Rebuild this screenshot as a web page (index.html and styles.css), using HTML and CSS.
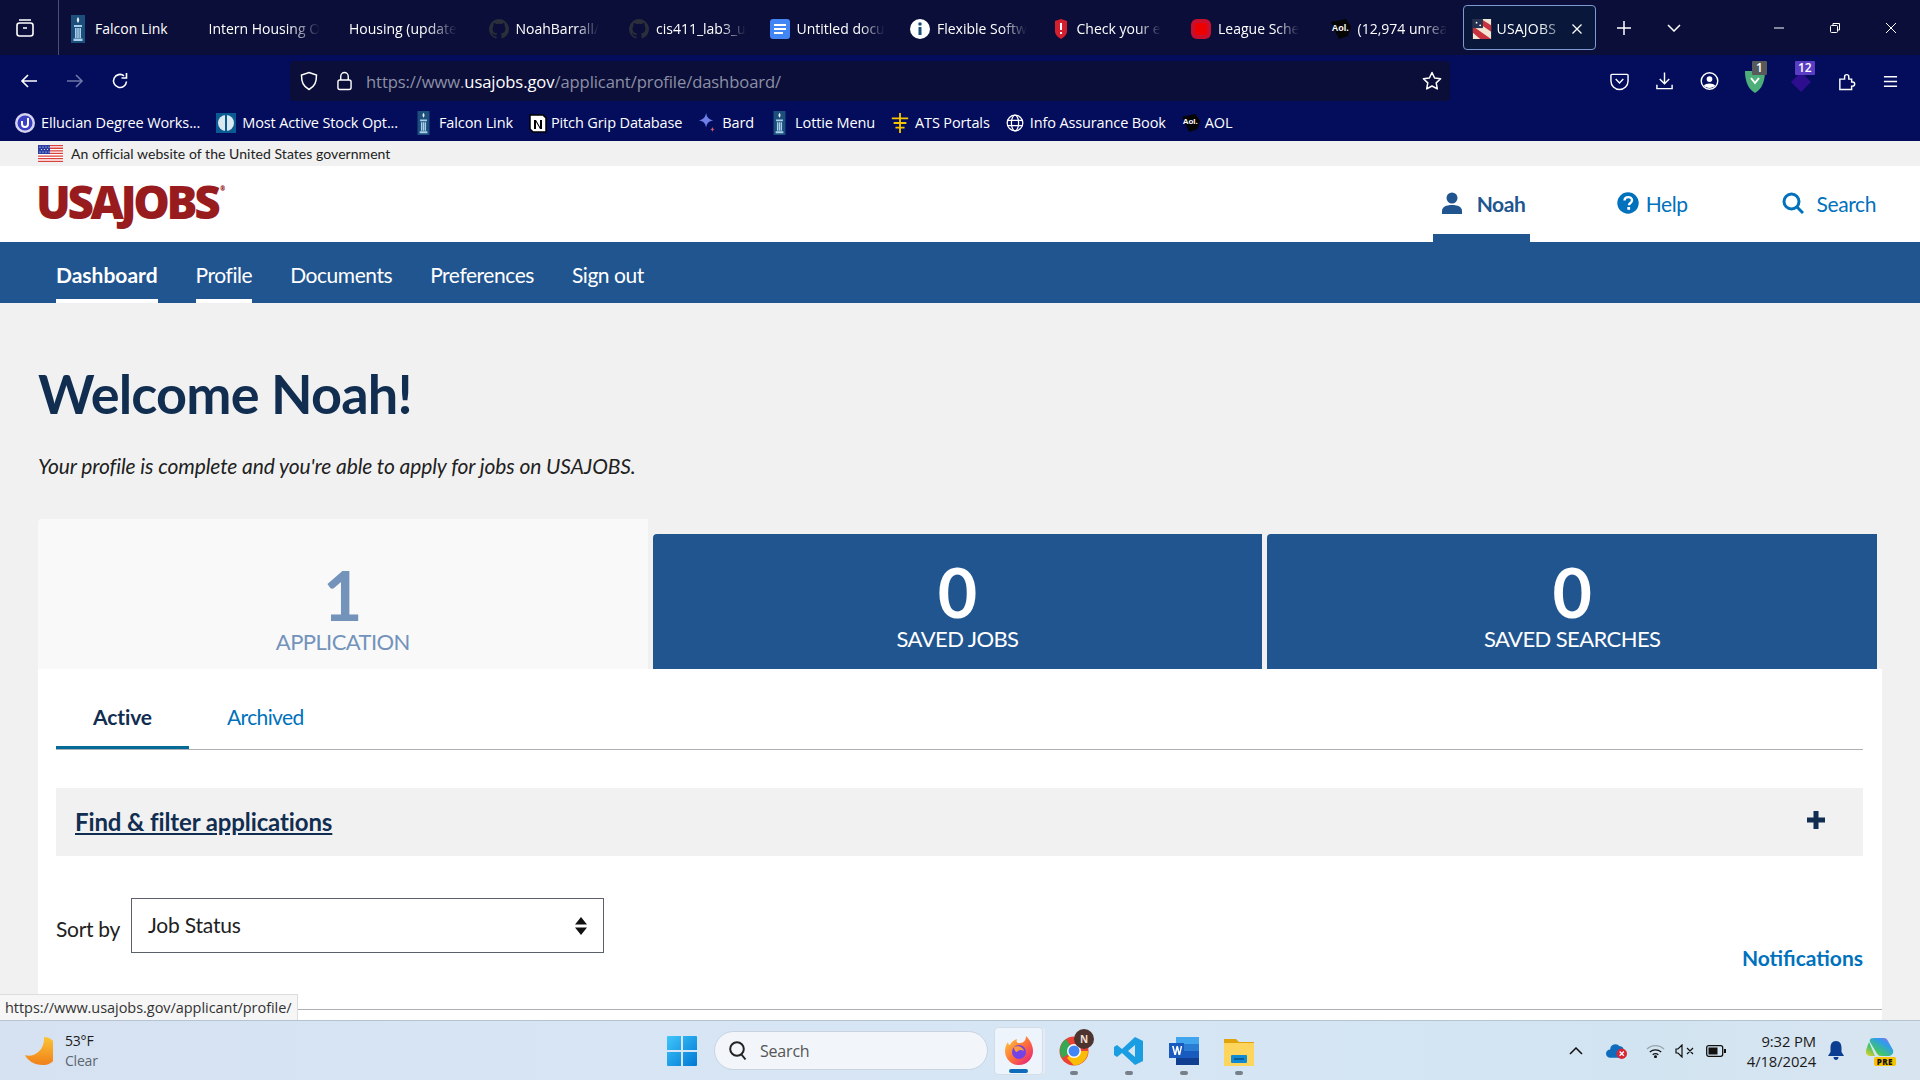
FILE: index.html
```html
<!DOCTYPE html>
<html lang="en">
<head>
<meta charset="utf-8">
<title>USAJOBS</title>
<link rel="stylesheet" href="styles.css">
</head>
<body>
<svg class="defs" width="0" height="0" aria-hidden="true">
  <defs>
    <symbol id="tower" viewBox="0 0 14 28">
      <rect width="14" height="28" fill="#1d4f7c"/>
      <path d="M7 2c1.600 2 1.600 4 0 6-1.600-2-1.600-4 0-6z" fill="#e8eef3"/>
      <path d="M3 10h8v2H3zM4 13h1.600v10H4zM6.200 13h1.600v10H6.200zM8.400 13H10v10H8.400zM2.500 23.500h9v2.500h-9z" fill="#a9d0ea"/>
    </symbol>
    <symbol id="gh" viewBox="0 0 16 16">
      <path fill="#2a2f3a" d="M8 0a8 8 0 0 0-2.500 15.600c.4.100.5-.2.5-.4v-1.400c-2.200.5-2.700-1-2.700-1-.4-.9-.9-1.200-.9-1.200-.7-.5.100-.5.100-.5.800.1 1.200.8 1.200.8.700 1.200 1.900.9 2.300.7.100-.5.300-.9.500-1.100-1.800-.2-3.600-.9-3.600-4 0-.9.300-1.600.8-2.100-.1-.2-.4-1 .1-2.100 0 0 .7-.2 2.200.8a7.600 7.600 0 0 1 4 0c1.500-1 2.200-.8 2.200-.8.500 1.100.200 1.900.100 2.100.500.500.800 1.200.800 2.100 0 3.100-1.900 3.800-3.700 4 .300.300.600.800.600 1.500v2.200c0 .200.100.500.500.400A8 8 0 0 0 8 0z"/>
    </symbol>
    <symbol id="aol" viewBox="0 0 20 20">
      <path d="M0 3 15 0l5 8-3 9-9 3-3-6z" fill="#050505"/>
      <text x=".8" y="11.500" font-family="Liberation Sans, sans-serif" font-size="9" font-weight="700" fill="#fff">Aol.</text>
    </symbol>
  </defs>
</svg>

<div class="tabstrip">
  <div class="strip-start">
    <svg class="ic20" viewBox="0 0 20 20" fill="none" stroke="#fff" stroke-width="1.600"><rect x="2" y="5" width="16" height="13" rx="2.500"/><path d="M4 2h12M8 10h4"/></svg>
  </div>
  <div class="tab tab-first"><svg class="fav-tower"><use href="#tower"/></svg><span class="tab-title">Falcon Link</span></div>
  <div class="tab no-fav"><span class="tab-title fade">Intern Housing O</span></div>
  <div class="tab no-fav"><span class="tab-title fade">Housing (update</span></div>
  <div class="tab"><svg class="fav"><use href="#gh"/></svg><span class="tab-title fade">NoahBarrall/</span></div>
  <div class="tab"><svg class="fav"><use href="#gh"/></svg><span class="tab-title fade">cis411_lab3_u</span></div>
  <div class="tab"><svg class="fav" viewBox="0 0 20 20"><rect width="20" height="20" rx="3" fill="#4285f4"/><path d="M4 5h12v2H4zM4 9h12v2H4zM4 13h9v2H4z" fill="#fff"/></svg><span class="tab-title fade">Untitled docu</span></div>
  <div class="tab"><svg class="fav" viewBox="0 0 20 20"><circle cx="10" cy="10" r="10" fill="#fff"/><circle cx="10" cy="5" r="1.800" fill="#1d4f7c"/><rect x="8.500" y="8" width="3" height="8" fill="#1d4f7c"/></svg><span class="tab-title fade">Flexible Softw</span></div>
  <div class="tab tab-shield"><svg class="fav-sm" viewBox="0 0 14 20"><path d="M1 2 7 0l6 2v10c0 4-3 6-6 8-3-2-6-4-6-8z" fill="#d4202e"/><path d="M6 4h2v7H6zM6 13h2v2H6z" fill="#fff"/></svg><span class="tab-title fade">Check your e</span></div>
  <div class="tab"><svg class="fav" viewBox="0 0 20 20"><rect width="20" height="20" rx="6" fill="#c8102e"/><rect x="4" y="4" width="12" height="12" rx="3" fill="#ee0000"/></svg><span class="tab-title fade">League Sche</span></div>
  <div class="tab tab-aol"><svg class="fav"><use href="#aol"/></svg><span class="tab-title fade">(12,974 unrea</span></div>
  <div class="tab tab-active">
    <svg class="fav" viewBox="0 0 20 22"><rect width="20" height="22" fill="#f1e4d3"/><path d="M0 8 20 22H8L0 15zM0 0l20 14V7L9 0z" fill="#c8313e"/><rect width="11" height="10" fill="#26304f"/><circle cx="4" cy="4" r="1" fill="#fff"/><circle cx="8" cy="7" r="1" fill="#fff"/></svg>
    <span class="tab-title active-title">USAJOBS</span>
    <svg class="tab-close" viewBox="0 0 12 12" stroke="#fff" stroke-width="1.300"><path d="M1.500 1.500l9 9M10.500 1.500l-9 9"/></svg>
  </div>
  <svg class="strip-plus" viewBox="0 0 16 16" stroke="#fff" stroke-width="1.500"><path d="M8 1v14M1 8h14"/></svg>
  <svg class="strip-chev" viewBox="0 0 14 8" fill="none" stroke="#fff" stroke-width="1.500"><path d="M1 1l6 6 6-6"/></svg>
  <div class="win-ctrls">
    <svg class="win-btn" viewBox="0 0 12 12" stroke="#fff"><path d="M1 6h10"/></svg>
    <svg class="win-btn" viewBox="0 0 12 12" fill="none" stroke="#fff"><rect x="1.500" y="3.500" width="7" height="7" rx="1"/><path d="M4 3V1.500h6.500V8H9"/></svg>
    <svg class="win-btn" viewBox="0 0 12 12" stroke="#fff"><path d="M1 1l10 10M11 1 1 11"/></svg>
  </div>
</div>

<div class="toolbar">
  <svg class="tb-ic tb-back" viewBox="0 0 18 18" fill="none" stroke="#fff" stroke-width="1.600"><path d="M17 9H2M8 3 2 9l6 6"/></svg>
  <svg class="tb-ic tb-fwd" viewBox="0 0 18 18" fill="none" stroke="#6f76a8" stroke-width="1.600"><path d="M1 9h15M10 3l6 6-6 6"/></svg>
  <svg class="tb-ic tb-reload" viewBox="0 0 18 18" fill="none" stroke="#fff" stroke-width="1.600"><path d="M15.500 9.500A6.500 6.500 0 1 1 13 3.800"/><path d="M15.500 1v5h-5"/></svg>
  <div class="urlbar">
    <svg class="ub-shield" viewBox="0 0 18 20" fill="none" stroke="#fff" stroke-width="1.500"><path d="M9 1.500 16.500 4c0 7-1.500 11-7.500 14.500C3 15 1.500 11 1.500 4z"/></svg>
    <svg class="ub-lock" viewBox="0 0 16 20" fill="none" stroke="#fff" stroke-width="1.500"><rect x="1" y="9" width="14" height="10" rx="2"/><path d="M4 9V5a4 4 0 0 1 8 0v4"/></svg>
    <span class="url"><span class="url-dim">https://www.</span>usajobs.gov<span class="url-dim">/applicant/profile/dashboard/</span></span>
    <svg class="ub-star" viewBox="0 0 20 20" fill="none" stroke="#fff" stroke-width="1.500" stroke-linejoin="round"><path d="M10 1.500l2.600 5.500 6 .8-4.400 4.100 1.100 6L10 15l-5.300 2.900 1.100-6L1.400 7.800l6-.8z"/></svg>
  </div>
  <div class="tb-right">
    <svg class="tr-ic" viewBox="0 0 20 20" fill="none" stroke="#fff" stroke-width="1.500"><path d="M2 3h16a1 1 0 0 1 1 1v6a9 9 0 0 1-18 0V4a1 1 0 0 1 1-1z"/><path d="M6 8l4 4 4-4"/></svg>
    <svg class="tr-ic" viewBox="0 0 20 20" fill="none" stroke="#fff" stroke-width="1.500"><path d="M10 1v12M5 8l5 5 5-5M2 14v4h16v-4"/></svg>
    <svg class="tr-ic" viewBox="0 0 20 20"><circle cx="10" cy="10" r="8.700" fill="none" stroke="#fff" stroke-width="1.500"/><circle cx="10" cy="8" r="3" fill="#fff"/><path d="M4 15c2-3 10-3 12 0-3 3-9 3-12 0z" fill="#fff"/></svg>
    <div class="ext ext-green">
      <svg class="ext-ic" viewBox="0 0 20 24"><path d="M0 2h20c0 10-3 18-10 22C3 20 0 12 0 2z" fill="#4caf7a"/><path d="M6 9l4 5 4-5" stroke="#fff" stroke-width="2" fill="none"/></svg>
      <span class="badge badge-gray">1</span>
    </div>
    <div class="ext ext-purple">
      <svg class="ext-ic" viewBox="0 0 20 24"><path d="M10 3l10 10-10 10L0 13z" fill="#2d0e8e"/></svg>
      <span class="badge badge-purple">12</span>
    </div>
    <svg class="tr-ic" viewBox="0 0 20 20" fill="none" stroke="#fff" stroke-width="1.500"><path d="M3 19V8h5V5.500a2.200 2.200 0 0 1 4.400 0V8h3v3h1a2.200 2.200 0 0 1 0 4.400h-1V19z"/></svg>
    <svg class="tr-ic tr-menu" viewBox="0 0 16 16" stroke="#fff" stroke-width="1.500"><path d="M1 3h14M1 8h14M1 13h14"/></svg>
  </div>
</div>

<div class="bookmarks">
  <div class="bm"><svg class="bm-fav" viewBox="0 0 20 20"><circle cx="10" cy="10" r="10" fill="#d6d3ee"/><circle cx="10" cy="10" r="7.500" fill="#3a3fc4"/><path d="M13 5v6a3 3 0 0 1-6 0V8" fill="none" stroke="#fff" stroke-width="2"/></svg><span>Ellucian Degree Works...</span></div>
  <div class="bm"><svg class="bm-fav" viewBox="0 0 20 20"><rect width="20" height="20" fill="#0a5a94"/><circle cx="10" cy="10" r="8" fill="#dbe8f0"/><path d="M9 2h2v16H9z" fill="#0a5a94"/></svg><span>Most Active Stock Opt...</span></div>
  <div class="bm"><svg class="bm-tower"><use href="#tower"/></svg><span>Falcon Link</span></div>
  <div class="bm bm-n"><svg class="bm-fav-n" viewBox="0 0 18 20"><path d="M1 2h13l3 3v14H4l-3-3z" fill="#fff" stroke="#000" stroke-width="1.500"/><path d="M5 7h2l4 7V7h2v9h-2L7 9v7H5z" fill="#000"/></svg><span>Pitch Grip Database</span></div>
  <div class="bm"><svg class="bm-fav-n" viewBox="0 0 18 22"><path d="M8 0c1 5 3 7 8 8-5 1-7 3-8 8-1-5-3-7-8-8 5-1 7-3 8-8z" fill="#6f7fe6"/><path d="M15 15c.4 2 1 2.700 3 3-2 .4-2.600 1-3 3-.4-2-1-2.600-3-3 2-.3 2.600-1 3-3z" fill="#d9606a"/></svg><span>Bard</span></div>
  <div class="bm"><svg class="bm-tower"><use href="#tower"/></svg><span>Lottie Menu</span></div>
  <div class="bm"><svg class="bm-fav-n" viewBox="0 0 18 22" fill="#f7c600"><path d="M8 0h2v22H8zM0 5h18v2H0zM2 10h14v2H2zM4 15h10v2H4z"/></svg><span>ATS Portals</span></div>
  <div class="bm bm-globe"><svg class="bm-fav-n" viewBox="0 0 20 20" fill="none" stroke="#fff" stroke-width="1.400"><circle cx="10" cy="10" r="8.700"/><ellipse cx="10" cy="10" rx="4" ry="8.700"/><path d="M1.500 7h17M1.500 13h17"/></svg><span>Info Assurance Book</span></div>
  <div class="bm bm-aol"><svg class="bm-fav-n"><use href="#aol"/></svg><span>AOL</span></div>
</div>

<div class="page">
  <div class="gov-banner">
    <svg class="flag" viewBox="0 0 25 17"><rect width="25" height="17" fill="#fff"/><path d="M0 0h25v1.300H0zM0 2.600h25v1.300H0zM0 5.200h25v1.300H0zM0 7.800h25v1.300H0zM0 10.400h25v1.300H0zM0 13h25v1.300H0zM0 15.700h25V17H0z" fill="#d9413c"/><rect width="12" height="9" fill="#2b3fa3"/><g fill="#fff"><circle cx="2" cy="2" r=".6"/><circle cx="5" cy="2" r=".6"/><circle cx="8" cy="2" r=".6"/><circle cx="11" cy="2" r=".6"/><circle cx="3.500" cy="4.500" r=".6"/><circle cx="6.500" cy="4.500" r=".6"/><circle cx="9.500" cy="4.500" r=".6"/><circle cx="2" cy="7" r=".6"/><circle cx="5" cy="7" r=".6"/><circle cx="8" cy="7" r=".6"/><circle cx="11" cy="7" r=".6"/></g></svg>
    <span>An official website of the United States government</span>
  </div>

  <header class="site-head">
    <div class="logo">USAJOBS<sup class="logo-r">®</sup></div>
    <nav class="head-links">
      <a class="hl hl-user"><svg class="hl-ic-user" viewBox="0 0 20 22" fill="#215590"><circle cx="10" cy="6" r="5.500"/><path d="M0 22v-3c0-4 4-6 10-6s10 2 10 6v3z"/></svg><b>Noah</b></a>
      <a class="hl hl-help"><svg class="hl-ic" viewBox="0 0 22 22"><circle cx="11" cy="11" r="10.700" fill="#0071bc"/><path d="M7.500 8.500c0-4.500 7.500-4.500 7.500-.3 0 3-3 2.500-3 5" fill="none" stroke="#fff" stroke-width="2.400"/><rect x="10.300" y="15" width="2.800" height="2.800" fill="#fff"/></svg>Help</a>
      <a class="hl hl-search"><svg class="hl-ic" viewBox="0 0 22 22" fill="none" stroke="#0071bc" stroke-width="3"><circle cx="9.500" cy="9.500" r="7.500"/><path d="M15 15l6 6"/></svg>Search</a>
    </nav>
  </header>

  <nav class="site-nav">
    <a class="sn sn-active sn-bold">Dashboard</a>
    <a class="sn sn-active">Profile</a>
    <a class="sn">Documents</a>
    <a class="sn">Preferences</a>
    <a class="sn">Sign out</a>
  </nav>

  <main class="main">
    <h1 class="welcome">Welcome Noah!</h1>
    <p class="lead">Your profile is complete and you're able to apply for jobs on USAJOBS.</p>

    <section class="stats">
      <div class="stat stat-on"><div class="stat-num">1</div><div class="stat-label">APPLICATION</div></div>
      <div class="stat"><div class="stat-num">0</div><div class="stat-label">SAVED JOBS</div></div>
      <div class="stat"><div class="stat-num">0</div><div class="stat-label">SAVED SEARCHES</div></div>
    </section>

    <section class="panel">
      <div class="ptabs">
        <a class="ptab ptab-on">Active</a>
        <a class="ptab">Archived</a>
      </div>
      <div class="filter">
        <a class="filter-link">Find &amp; filter applications</a>
        <svg class="filter-plus" viewBox="0 0 18 18" fill="#112e51"><path d="M6.500 0h5v6.500H18v5h-6.500V18h-5v-6.500H0v-5h6.500z"/></svg>
      </div>
      <div class="sort-row">
        <label class="sort-label">Sort by</label>
        <div class="select"><span>Job Status</span><svg class="sel-arrows" viewBox="0 0 12 18" fill="#111"><path d="M6 0l6 7.500H0zM6 18l6-7.500H0z"/></svg></div>
        <a class="notif">Notifications</a>
      </div>
      <div class="panel-rule"></div>
    </section>
  </main>

  <div class="status-tip">https://www.usajobs.gov/applicant/profile/</div>
</div>

<footer class="taskbar">
  <div class="tb-weather">
    <svg class="moon" viewBox="0 0 28 28"><defs><linearGradient id="mg" x1="0" y1="0" x2="0" y2="1"><stop offset="0" stop-color="#fbc434"/><stop offset="1" stop-color="#f0801a"/></linearGradient></defs><path d="M19 0a14 14 0 0 1-1 28C9 28 2 23 0 18c9 3 20-5 19-18z" fill="url(#mg)"/></svg>
    <div class="w-text"><div class="w-temp">53°F</div><div class="w-cond">Clear</div></div>
  </div>
  <div class="tb-center">
    <svg class="winlogo" viewBox="0 0 30 30"><defs><linearGradient id="wg" x1="0" y1="0" x2="1" y2="1"><stop offset="0" stop-color="#3fc6fb"/><stop offset="1" stop-color="#0078d4"/></linearGradient></defs><path d="M0 1a1 1 0 0 1 1-1h13v14H0zM16 0h13a1 1 0 0 1 1 1v13H16zM0 16h14v14H1a1 1 0 0 1-1-1zM16 16h14v13a1 1 0 0 1-1 1H16z" fill="url(#wg)"/></svg>
    <div class="tb-search"><svg class="s-ic" viewBox="0 0 18 20" fill="none" stroke="#222" stroke-width="2"><circle cx="8" cy="8" r="6.800"/><path d="M12.500 13.500l4 5"/></svg><span>Search</span></div>
    <div class="app app-on">
      <svg class="app-ic" viewBox="0 0 30 30"><defs><linearGradient id="ff" x1="0" y1="0" x2="1" y2="1"><stop offset="0" stop-color="#ffd53d"/><stop offset=".5" stop-color="#ff7139"/><stop offset="1" stop-color="#e31587"/></linearGradient></defs><path d="M15 29A14 14 0 0 1 1 15c0-4 1-6 3-9 0 2 1 3 2 3 1-3 4-5 7-6-1 3 0 4 3 4 4 0 6-3 6-7 4 4 7 9 7 15a14 14 0 0 1-14 14z" fill="url(#ff)"/><circle cx="15" cy="16" r="7" fill="#7542e5"/><path d="M10 11c4-2 9 0 10 4-3-2-6-1-7 1-2 0-3-3-3-5z" fill="#ff9a3c"/></svg>
      <span class="app-mark mark-on"></span>
    </div>
    <div class="app app-chrome">
      <svg class="app-ic" viewBox="0 0 30 30"><circle cx="15" cy="15" r="14.500" fill="#ea4335"/><path d="M15 15 3 22A14.500 14.500 0 0 1 7 3z" fill="#34a853"/><path d="M15 15h14a14.500 14.500 0 0 1-14 14.500L8 22z" fill="#fbbc05"/><circle cx="15" cy="15" r="7" fill="#fff"/><circle cx="15" cy="15" r="5.500" fill="#4285f4"/></svg>
      <span class="chrome-badge">N</span>
      <span class="app-mark"></span>
    </div>
    <div class="app">
      <svg class="app-ic" viewBox="0 0 30 30"><path d="M21 1l8 4v20l-8 4-13-12-5 4-3-2V11l3-2 5 4zm0 8-7 6 7 6z" fill="#1b9de2"/></svg>
      <span class="app-mark"></span>
    </div>
    <div class="app">
      <svg class="app-ic" viewBox="0 0 30 30"><rect x="7" y="1" width="23" height="7" fill="#41a5ee"/><rect x="7" y="8" width="23" height="7" fill="#2b7cd3"/><rect x="7" y="15" width="23" height="7" fill="#185abd"/><rect x="7" y="22" width="23" height="7" fill="#103f91"/><rect y="7" width="15" height="15" fill="#185abd"/><path d="M3 10h1.800l1.200 6 1.500-6H9l1.500 6 1.200-6h1.500l-2 9H9.500L8.200 13.500 7 19H5.300z" fill="#fff"/></svg>
      <span class="app-mark"></span>
    </div>
    <div class="app">
      <svg class="app-ic" viewBox="0 0 30 30"><path d="M0 3h12l3 3h15v24H0z" fill="#e0a30c"/><rect y="7" width="30" height="23" fill="#fdd55c"/><rect x="7" y="19" width="16" height="8" rx="1" fill="#0f8ad6"/><rect x="10" y="22" width="10" height="2" fill="#085d96"/></svg>
      <span class="app-mark"></span>
    </div>
  </div>
  <div class="tb-tray">
    <svg class="tray-caret" viewBox="0 0 14 8" fill="none" stroke="#111" stroke-width="1.500"><path d="M1 7l6-6 6 6"/></svg>
    <svg class="tray-cloud" viewBox="0 0 20 16"><path d="M4 15a4 4 0 0 1 0-8 5 5 0 0 1 9-3c3 0 4 2 4 5v6z" fill="#0f6cbd"/><circle cx="15" cy="11" r="5" fill="#d92534"/><path d="M13 9l4 4M17 9l-4 4" stroke="#fff" stroke-width="1.300"/></svg>
    <svg class="tray-wifi" viewBox="0 0 20 14" fill="none" stroke="#111" stroke-width="1.300"><path d="M1 5c5-5 13-5 18 0" stroke="#9aa3ad"/><path d="M4 8c3.500-3 8.500-3 12 0M7 11c2-1.500 4-1.500 6 0"/><circle cx="10" cy="13" r=".9" fill="#111"/></svg>
    <svg class="tray-sound" viewBox="0 0 20 14" fill="none" stroke="#111" stroke-width="1.200"><path d="M1 5v4h2l4 4V1L3 5zM12 4l6 6M18 4l-6 6"/></svg>
    <svg class="tray-batt" viewBox="0 0 20 12"><rect x=".7" y=".7" width="16" height="10.600" rx="2" fill="none" stroke="#111" stroke-width="1.300"/><rect x="2.500" y="2.500" width="9" height="7" fill="#111"/><path d="M18 4h2v4h-2z" fill="#111"/></svg>
    <div class="clock"><div>9:32 PM</div><div>4/18/2024</div></div>
    <svg class="tray-bell" viewBox="0 0 16 20" fill="#0b3d91"><path d="M8 0c4 0 5.500 3 5.500 7v4l2.500 4H0l2.500-4V7C2.500 3 4 0 8 0zM5.500 16h5c0 4-5 4-5 0z"/></svg>
    <div class="copilot">
      <svg class="copilot-ic" viewBox="0 0 28 24"><defs><linearGradient id="cp" x1="0" y1="1" x2="1" y2="0"><stop offset="0" stop-color="#f5d020"/><stop offset=".35" stop-color="#3ec46d"/><stop offset=".7" stop-color="#2e9cf0"/><stop offset="1" stop-color="#c45be0"/></linearGradient></defs><path d="M8 2h10c2 0 3 1 4 3l5 9c1 3-1 6-4 6h-8c-3 0-4-2-5-4L4 6C3 3 5 2 8 2z M0 14l3-8 6 14H4c-3 0-5-3-4-6z" fill="url(#cp)"/></svg>
      <span class="pre">PRE</span>
    </div>
  </div>
</footer>
</body>
</html>
```

FILE: styles.css
```css
* { box-sizing: border-box; }
html, body { margin: 0; height: 100%; }
body {
  width: 1920px; height: 1080px; overflow: hidden;
  display: flex; flex-direction: column;
  font-family: "Lato", "Liberation Sans", sans-serif;
  background: #f1f1f1;
}
.defs { position: absolute; }
a { display: block; }

/* Browser chrome */
.tabstrip, .toolbar, .bookmarks { font-family: "Open Sans", "Liberation Sans", sans-serif; color: #fff; flex: none; }
.tabstrip { height: 55px; background: #0a0e38; display: flex; align-items: center; }
.strip-start { width: 59px; height: 55px; border-right: 1px solid #4b4f73; display: flex; align-items: center; padding-left: 15px; flex: none; }
.ic20 { width: 20px; height: 20px; }
.tab { width: 140.500px; height: 45px; display: flex; align-items: center; gap: 7px; padding: 2px 0 0 8px; flex: none; font-size: 14px; }
.tab-first { padding-left: 12px; }
.tab.no-fav { padding-left: 9px; }
.tab-shield { padding-left: 11px; gap: 9px; }
.tab-title { display: block; white-space: nowrap; letter-spacing: 0; }
.fade { -webkit-mask-image: linear-gradient(to right, #000 72%, transparent); mask-image: linear-gradient(to right, #000 72%, transparent); }
.fav { width: 20px; height: 20px; flex: none; }
.fav-sm { width: 14px; height: 20px; flex: none; }
.fav-tower { width: 14px; height: 28px; flex: none; margin-right: 3px; }
.tab-aol { width: 139px; padding-left: 7px; }
.tab-active { width: 133px; background: #08173a; border: 1px solid #7f9ad0; border-radius: 4px; padding-left: 8px; gap: 5px; }
.active-title { letter-spacing: .2px; width: 64px; -webkit-mask-image: linear-gradient(to right, #000 65%, rgba(0,0,0,.35)); mask-image: linear-gradient(to right, #000 65%, rgba(0,0,0,.35)); }
.tab-close { width: 12px; height: 12px; flex: none; margin-left: 5px; }
.strip-plus { width: 16px; height: 16px; margin-left: 20px; flex: none; }
.strip-chev { width: 14px; height: 8px; margin-left: 35px; flex: none; }
.win-ctrls { margin-left: auto; display: flex; gap: 44px; padding-right: 23px; }
.win-btn { width: 12px; height: 12px; }

.toolbar { height: 46px; background: #030d5c; display: flex; align-items: center; padding-top: 6px; padding-left: 20px; }
.tb-ic { width: 18px; height: 18px; flex: none; }
.tb-fwd { margin-left: 28px; }
.tb-reload { margin-left: 27px; }
.urlbar { width: 1160px; height: 40px; margin-left: 161px; background: #0a0e38; border-radius: 4px; display: flex; align-items: center; padding-left: 10px; flex: none; }
.ub-shield { width: 18px; height: 20px; flex: none; }
.ub-lock { width: 15px; height: 20px; margin-left: 19px; flex: none; }
.url { font-size: 16.600px; margin-left: 14px; letter-spacing: -.1px; }
.url-dim { color: #8d90a6; }
.ub-star { width: 20px; height: 20px; margin-left: auto; margin-right: 8px; flex: none; }
.tb-right { display: flex; align-items: center; margin-left: 160px; gap: 26px; }
.tr-ic { width: 19px; height: 20px; flex: none; }
.tr-menu { width: 15px; height: 15px; margin-left: 1px; }
.ext { position: relative; width: 20px; height: 24px; flex: none; }
.ext-ic { width: 20px; height: 24px; display: block; }
.badge { position: absolute; top: -8px; left: 7px; height: 14px; min-width: 14px; padding: 0 4px; color: #fff; font-size: 12px; line-height: 14px; font-weight: 600; text-align: center; border-radius: 1px; }
.badge-gray { background: #58595b; }
.badge-purple { background: #5b3cc4; left: 4px; padding: 0 3px; }

.bookmarks { height: 40px; background: #030d5c; display: flex; align-items: center; padding: 3px 0 0 15px; gap: 16px; font-size: 14.500px; }
.bm { display: flex; align-items: center; gap: 6px; white-space: nowrap; letter-spacing: -.12px; }
.bm-fav { width: 20px; height: 20px; flex: none; }
.bm-tower { width: 13px; height: 24px; flex: none; margin: 0 3px 0 3px; }
.bm-fav-n { width: 18px; height: 20px; flex: none; }
.bm-n { gap: 4px; }
.bm-globe .bm-fav-n { height: 18px; }
.bm-aol { gap: 5px; }

/* Page */
.page { position: relative; flex: 1; min-height: 0; overflow: hidden; background: #f1f1f1; }
.gov-banner { height: 25px; padding-left: 38px; display: flex; align-items: center; gap: 8px; font-size: 14px; letter-spacing: .05px; color: #212121; }
.flag { width: 25px; height: 17px; flex: none; }
.site-head { height: 76px; background: #fff; display: flex; justify-content: space-between; padding-left: 36px; }
.logo { font-family: "Open Sans", sans-serif; font-weight: 800; font-size: 46px; line-height: 70px; color: #981b1e; letter-spacing: -3.400px; display: flex; align-items: flex-start; height: 76px; }
.logo-r { font-size: 6px; line-height: 1; margin: 20px 0 0 3px; letter-spacing: 0; }
.head-links { display: flex; align-items: stretch; font-size: 21px; color: #0071bc; padding-right: 44px; }
.hl { display: flex; align-items: center; padding-bottom: 2px; letter-spacing: -.4px; }
.hl-user { width: 97px; padding: 6px 0 0 9px; border-bottom: 8px solid #215590; color: #215590; gap: 15px; letter-spacing: -.4px; }
.hl-help { margin-left: 87px; gap: 7px; }
.hl-search { margin-left: 94px; gap: 13px; }
.hl-ic-user { width: 20px; height: 22px; flex: none; }
.hl-ic { width: 22px; height: 22px; flex: none; }
.site-nav { height: 61px; background: #215590; display: flex; gap: 38px; padding-left: 56px; color: #fff; font-size: 21px; letter-spacing: -.45px; }
.sn { height: 61px; line-height: 57px; padding-top: 4px; }
.sn-active { border-bottom: 4px solid #fff; }
.sn-bold { font-weight: 700; letter-spacing: 0; }

.main { padding: 0 38px; }
.welcome { margin: 56px 0 0; font-size: 54px; line-height: 70px; font-weight: 700; letter-spacing: -.8px; color: #112e51; }
.lead { margin: 22px 0 0; font-size: 21px; line-height: 30px; font-style: italic; letter-spacing: -.1px; color: #212121; }
.stats { display: flex; align-items: flex-end; gap: 5px; margin: 38px 5px 0 0; }
.stat { flex: 1; height: 135px; background: #215590; color: #fff; text-align: center; border-radius: 4px 0 0 0; padding-top: 21px; }
.stat-on { height: 150px; background: #f9f9f9; color: #7393bb; padding-top: 39px; }
.stat-num { font-size: 68px; line-height: 74px; font-weight: 700; }
.stat-label { font-size: 22px; line-height: 30px; margin-top: -5px; letter-spacing: -.58px; }

.panel { width: 1844px; background: #fff; padding: 0 19px 0 18px; height: 400px; }
.ptabs { height: 81px; display: flex; border-bottom: 1px solid #aeb0b5; }
.ptab { font-size: 21px; line-height: 96px; height: 80px; padding: 0 38px; color: #0071bc; letter-spacing: -.6px; }
.ptab-on { font-weight: 700; color: #112e51; border-bottom: 3px solid #046b99; padding: 0 37px; letter-spacing: -.1px; }
.filter { margin-top: 38px; height: 68px; background: #f1f1f1; display: flex; align-items: center; justify-content: space-between; padding: 0 38px 0 19px; }
.filter-link { font-size: 24px; font-weight: 700; letter-spacing: -.12px; color: #112e51; text-decoration: underline; margin-top: -2px; }
.filter-plus { width: 18px; height: 18px; margin-top: -4px; }
.sort-row { margin-top: 42px; display: flex; height: 111px; }
.sort-label { font-size: 21px; line-height: 62px; letter-spacing: -.3px; color: #212121; width: 75px; flex: none; }
.select { width: 473px; height: 55px; border: 1px solid #5b616b; display: flex; align-items: center; justify-content: space-between; font-size: 21px; letter-spacing: -.2px; padding: 0 16px; color: #212121; }
.select span { margin-top: -2px; }
.sel-arrows { width: 12px; height: 18px; }
.notif { margin-left: auto; margin-top: 45px; font-size: 21px; font-weight: 700; color: #0071bc; line-height: 30px; }
.panel-rule { height: 1px; background: #aeb0b5; margin: 0 -19px 0 -18px; }
.status-tip { position: absolute; left: 0; bottom: 0; height: 26px; padding: 0 5px; font-size: 14.500px; line-height: 25px; color: #333; background: #f6f6f6; border: 1px solid #ddd; border-left: 0; border-bottom: 0; font-family: "Open Sans", sans-serif; letter-spacing: -.05px; }

/* Taskbar */
.taskbar { height: 60px; flex: none; display: flex; align-items: center; position: relative; justify-content: space-between; background: linear-gradient(90deg, #d6e2f1, #d7e6f5 50%, #d2e4f1 85%, #d8e5f1); border-top: 1px solid #b6c3d0; font-family: "Open Sans", sans-serif; color: #1a1a1a; }
.tb-weather { display: flex; align-items: center; gap: 12px; padding-left: 25px; width: 667px; flex: none; }
.moon { width: 28px; height: 28px; flex: none; }
.w-temp { font-size: 14px; line-height: 20px; letter-spacing: -.2px; }
.w-cond { font-size: 14px; line-height: 20px; color: #5c6670; letter-spacing: -.2px; }
.tb-center { display: flex; align-items: center; flex: none; }
.winlogo { width: 30px; height: 30px; flex: none; }
.tb-search { width: 274px; height: 39px; margin-left: 17px; border-radius: 20px; background: #f2f6fb; border: 1px solid #c8d3df; display: flex; align-items: center; padding-left: 14px; gap: 13px; font-size: 16px; color: #555; letter-spacing: -.2px; }
.s-ic { width: 18px; height: 20px; flex: none; }
.app { position: relative; width: 45px; height: 48px; margin-left: 10px; display: flex; justify-content: center; align-items: center; flex: none; }
.tb-search + .app { margin-left: 6px; width: 49px; }
.app-chrome { margin-left: 8px; }
.app-on { background: #eef4fb; border: 1px solid #d2dde8; border-radius: 4px; box-shadow: 3px 0 0 -1px #e3ecf5; }
.app-ic { width: 30px; height: 30px; }
.app-mark { position: absolute; bottom: 0; left: 50%; margin-left: -4px; width: 8px; height: 4px; border-radius: 2px; background: #76808a; }
.mark-on { width: 19px; margin-left: -10px; background: #0f6cbd; bottom: 1px; }
.chrome-badge { position: absolute; top: 2px; right: 2px; width: 20px; height: 20px; border-radius: 50%; background: #4e342e; color: #f1e0d6; font-size: 10px; line-height: 20px; text-align: center; font-weight: 700; }
.tb-tray { display: flex; align-items: center; padding-right: 24px; margin-left: auto; }
.tray-caret { width: 14px; height: 8px; flex: none; }
.tray-cloud { width: 21px; height: 17px; margin-left: 23px; flex: none; }
.tray-wifi { width: 19px; height: 14px; margin-left: 19px; flex: none; }
.tray-sound { width: 20px; height: 14px; margin-left: 10px; flex: none; }
.tray-batt { width: 20px; height: 12px; margin-left: 11px; flex: none; }
.clock { width: 90px; text-align: right; font-size: 14.800px; line-height: 20px; letter-spacing: -.1px; }
.tray-bell { width: 16px; height: 20px; margin-left: 12px; flex: none; }
.copilot { position: relative; width: 30px; height: 30px; margin-left: 22px; flex: none; }
.copilot-ic { width: 28px; height: 24px; display: block; }
.pre { position: absolute; right: 0; bottom: 0; background: #f7c200; color: #111; font-size: 8px; font-weight: 800; line-height: 9px; padding: 0 3px; border-radius: 2px; letter-spacing: .5px; }
```
